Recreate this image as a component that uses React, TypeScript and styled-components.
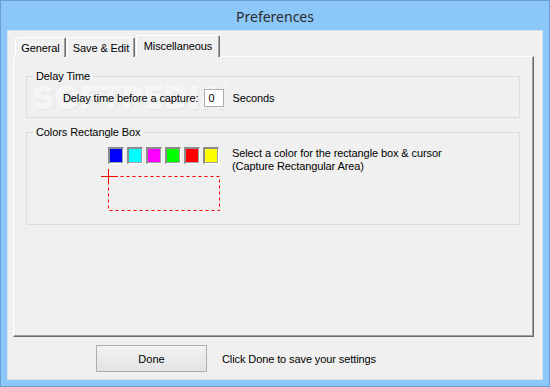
import { createGlobalStyle } from 'styled-components'
import styled from 'styled-components'

const GlobalStyle = createGlobalStyle`
  html, body {
    margin: 0;
    padding: 0;
    background: #8bc7f8;
  }
  * {
    box-sizing: border-box;
  }
`

const Window = styled.div`
  position: relative;
  width: 550px;
  height: 387px;
  background: #8bc7f8;
  border: 1px solid #6a9fd3;
  display: flex;
  flex-direction: column;
  font-family: 'Liberation Sans', Arial, sans-serif;
  font-size: 11px;
  letter-spacing: -0.1px;
  color: #000;
`

const TitleBar = styled.div`
  height: 29px;
  display: flex;
  align-items: center;
  justify-content: center;
  font-family: 'Noto Sans', 'Open Sans', sans-serif;
  font-size: 14px;
  letter-spacing: 0;
  color: #2b2b2b;
  padding-top: 1px;
`

const Client = styled.div`
  flex: 1;
  margin: 0 6px 6px 6px;
  background: #f0f0f0;
  border: 1px solid #d5e3f0;
  display: flex;
  flex-direction: column;
  padding: 5px 8px 0 5px;
`

const TabStrip = styled.div`
  display: flex;
  align-items: flex-end;
  height: 21px;
  padding-left: 2px;
  position: relative;
  z-index: 1;
  margin-bottom: -1px;
`

const Tab = styled.div<{ $active?: boolean; $w: number }>`
  width: ${(p) => p.$w + (p.$active ? 4 : 0)}px;
  height: ${(p) => (p.$active ? 22 : 20)}px;
  margin: ${(p) => (p.$active ? '0 -2px 0 0' : '0 1px 0 0')};
  display: flex;
  align-items: center;
  justify-content: center;
  padding-bottom: ${(p) => (p.$active ? 2 : 0)}px;
  background: #f0f0f0;
  border-top: 1px solid #fff;
  border-left: 1px solid #fff;
  border-right: 1px solid #696969;
  box-shadow: inset -1px 0 0 #a0a0a0;
  border-radius: 2px 2px 0 0;
  white-space: nowrap;
`

const Panel = styled.div`
  height: 281px;
  background: #f0f0f0;
  border-top: 1px solid #fff;
  border-left: 1px solid #fff;
  border-right: 1px solid #696969;
  border-bottom: 1px solid #696969;
  box-shadow: inset -1px -1px 0 #a0a0a0;
  padding: 13px 13px 0 12px;
  display: flex;
  flex-direction: column;
  gap: 8px;
`

const Group = styled.fieldset<{ $h: number }>`
  margin: 0;
  height: ${(p) => p.$h}px;
  border: 1px solid #dcdcdc;
  padding: 0;
  position: relative;
`

const Legend = styled.legend`
  margin-left: 6px;
  padding: 0 3px;
  font-size: 11px;
  line-height: 13px;
`

const DelayRow = styled.div`
  position: relative;
  z-index: 2;
  display: flex;
  align-items: center;
  padding: 0 0 0 36px;
  margin-top: 6px;
`

const NumberBox = styled.div`
  width: 20px;
  height: 18px;
  margin: 0 8px 0 6px;
  background: #fff;
  border: 1px solid #abadb3;
  display: flex;
  align-items: center;
  padding-left: 3px;
`

const ColorsBody = styled.div`
  display: grid;
  grid-template-columns: 111px auto;
  column-gap: 13px;
  padding-left: 81px;
  margin-top: 8px;
`

const SwatchRow = styled.div`
  display: flex;
  gap: 3px;
`

const Swatch = styled.div<{ $color: string }>`
  width: 16px;
  height: 17px;
  background: ${(p) => p.$color};
  border-style: solid;
  border-width: 2px 1px 1px 2px;
  border-color: #8c8c8c #fff #fff #8c8c8c;
  box-shadow: inset -1px -1px 0 #a0a0a0;
`

const Preview = styled.svg`
  display: block;
  margin: 5px 0 0 -7px;
`

const HintText = styled.div`
  line-height: 13px;
`

const ButtonRow = styled.div`
  display: flex;
  align-items: center;
  padding: 8px 0 0 83px;
  gap: 15px;
`

const Button = styled.button`
  width: 111px;
  height: 27px;
  font-family: 'Liberation Sans', Arial, sans-serif;
  font-size: 11px;
  color: #000;
  background: linear-gradient(#f2f2f2, #e3e3e3);
  border: 1px solid #adadad;
  border-radius: 0;
`

const Watermark = styled.div`
  position: absolute;
  z-index: 1;
  left: 33px;
  top: 80px;
  font-family: 'DejaVu Sans', sans-serif;
  font-weight: bold;
  font-size: 30px;
  letter-spacing: 0;
  color: #f5f5f5;
  text-shadow: 1px 1px 1px #e4e4e4, -1px -1px 0 #fafafa;
  pointer-events: none;
  sup {
    font-size: 10px;
    vertical-align: top;
  }
`

const colors = ['#0000ff', '#00ffff', '#ff00ff', '#00ff00', '#ff0000', '#ffff00']

const App = () => {
  return (
    <>
      <GlobalStyle />
      <Window>
        <TitleBar>Preferences</TitleBar>
        <Client>
          <TabStrip>
            <Tab $w={51}>General</Tab>
            <Tab $w={68}>Save &amp; Edit</Tab>
            <Tab $w={80} $active>
              Miscellaneous
            </Tab>
          </TabStrip>
          <Panel>
            <Group $h={48}>
              <Legend>Delay Time</Legend>
              <DelayRow>
                <span>Delay time before a capture:</span>
                <NumberBox>0</NumberBox>
                <span>Seconds</span>
              </DelayRow>
            </Group>
            <Group $h={99}>
              <Legend>Colors Rectangle Box</Legend>
              <ColorsBody>
                <div>
                  <SwatchRow>
                    {colors.map((c) => (
                      <Swatch key={c} $color={c} />
                    ))}
                  </SwatchRow>
                  <Preview width='120' height='43' viewBox='0 0 120 43'>
                    <rect
                      x='7.5'
                      y='7.5'
                      width='111'
                      height='34'
                      fill='none'
                      stroke='#ff0000'
                      strokeWidth='1'
                      strokeDasharray='3 3'
                    />
                    <line x1='0' y1='7.5' x2='17' y2='7.5' stroke='#ff0000' strokeWidth='1' />
                    <line x1='7.5' y1='0' x2='7.5' y2='15' stroke='#ff0000' strokeWidth='1' />
                  </Preview>
                </div>
                <HintText>
                  Select a color for the rectangle box &amp; cursor
                  <br />
                  (Capture Rectangular Area)
                </HintText>
              </ColorsBody>
            </Group>
          </Panel>
          <ButtonRow>
            <Button>Done</Button>
            <span>Click Done to save your settings</span>
          </ButtonRow>
        </Client>
        <Watermark>
          SOFTPEDIA<sup>®</sup>
        </Watermark>
      </Window>
    </>
  )
}

export default App
